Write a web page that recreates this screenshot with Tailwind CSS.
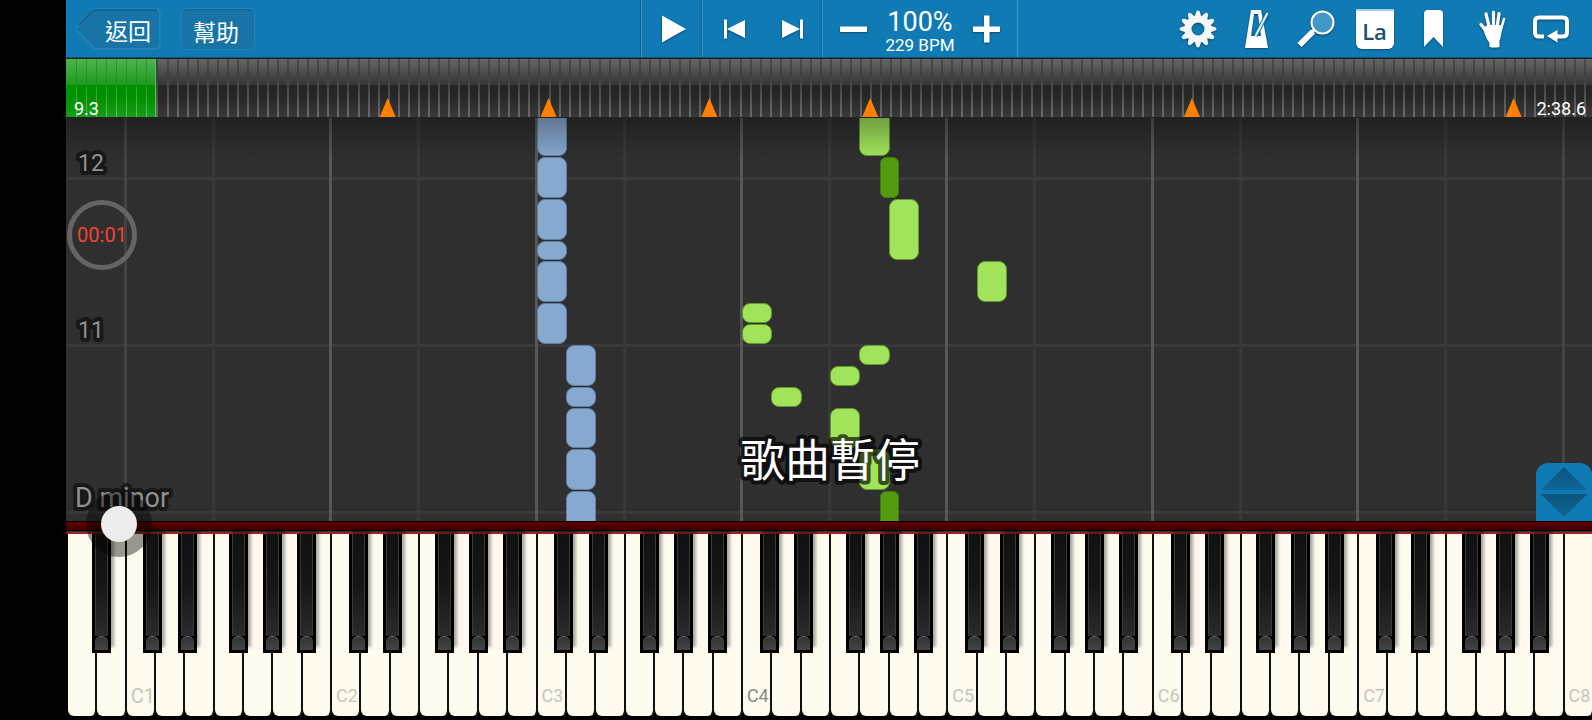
<!DOCTYPE html>
<html lang="zh-Hant">
<head>
<meta charset="UTF-8">
<meta name="viewport" content="width=device-width, initial-scale=1.0">
<title>Piano</title>
<script src="https://cdn.jsdelivr.net/npm/@tailwindcss/browser@4"></script>
</head>
<body class="bg-black">

	<div class="h-screen flex flex-col pl-[66px] overflow-hidden font-[Roboto,'Noto_Sans_CJK_TC',sans-serif] text-white">

		<!-- toolbar -->
		<header class="h-[58px] shrink-0 grid grid-cols-[1fr_auto_1fr] bg-[#107ab4] border-b border-[#0b4f75]">
			<div class="flex items-center pt-px pl-[9px] gap-5">
				<button type="button" class="relative w-[86px] h-[42px] pl-5 pt-2 text-[23px]">
					<svg class="absolute inset-0" width="86" height="42" viewBox="0 0 86 42" fill="none">
						<path d="M22 1H80Q85 1 85 6V36Q85 41 80 41H22Q19 41 17 38L2 23Q1 21 2 19L17 4Q19 1 22 1Z" fill="#1874a6" stroke="#2585ba" stroke-width="1.5"/>
						<path d="M4 17L17 4Q19 2 22 2H82" stroke="#135f89" stroke-width="1.5"/>
					</svg>
					<span class="relative">返回</span>
				</button>
				<button type="button" class="w-[74px] h-[42px] pt-2 pr-1 text-[23px] rounded-md bg-[#1874a6] border border-[#2585ba] shadow-[inset_0_1px_1px_#135f89]">幫助</button>
			</div>

			<div class="flex pl-px">
				<button type="button" aria-label="Play" class="w-[61px] grid place-items-center border-l border-[#3a97c8] shadow-[-1px_0_0_#0c6494]">
					<svg class="drop-shadow-[0_1px_1px_#0006] ml-1" width="26" height="28" viewBox="0 0 26 28" fill="#fff"><path d="M1 0.5L25 14L1 27.5Z"/></svg>
				</button>
				<div class="w-[120px] flex border-l border-[#3a97c8] shadow-[-1px_0_0_#0c6494]">
					<button type="button" aria-label="Previous" class="flex-1 grid place-items-center">
						<svg class="drop-shadow-[0_1px_1px_#0006] ml-1" width="22" height="20" viewBox="0 0 22 20" fill="#fff"><path d="M0 0.5H3V19.5H0ZM3 10L21 1V19Z"/></svg>
					</button>
					<button type="button" aria-label="Next" class="flex-1 grid place-items-center">
						<svg class="drop-shadow-[0_1px_1px_#0006]" width="22" height="20" viewBox="0 0 22 20" fill="#fff"><path d="M22 0.5H19V19.5H22ZM19 10L1 1V19Z"/></svg>
					</button>
				</div>
				<div class="w-[196px] flex items-stretch border-x border-[#3a97c8] shadow-[-1px_0_0_#0c6494]">
					<button type="button" aria-label="Slower" class="flex-1 grid place-items-center">
						<svg class="drop-shadow-[0_1px_1px_#0006]" width="28" height="28" viewBox="0 0 28 28" fill="#fff"><path d="M0 11.5H27V17H0Z"/></svg>
					</button>
					<div class="w-[72px] flex flex-col items-center pt-2">
						<span class="text-[27px] leading-[29px]">100%</span>
						<span class="text-[17px] leading-4 whitespace-nowrap">229 BPM</span>
					</div>
					<button type="button" aria-label="Faster" class="flex-1 grid place-items-center">
						<svg class="drop-shadow-[0_1px_1px_#0006]" width="28" height="28" viewBox="0 0 28 28" fill="#fff"><path d="M0 11.5H11V0.5H16.5V11.5H27V17H16.5V27.5H11V17H0Z"/></svg>
					</button>
				</div>
			</div>

			<div class="flex justify-end pr-3 pt-px">
				<button type="button" aria-label="Settings" class="w-[59px] grid place-items-center">
					<svg class="drop-shadow-[0_1px_1px_#0006]" width="38" height="38" viewBox="-19 -19 38 38">
						<g id="gear-teeth" fill="#f6f6f6"></g>
						<circle r="10" fill="none" stroke="#f6f6f6" stroke-width="7"/>
					</svg>
				</button>
				<button type="button" aria-label="Metronome" class="w-[59px] grid place-items-center">
					<svg class="drop-shadow-[0_1px_1px_#0006]" width="26" height="38" viewBox="0 0 26 38">
						<path fill="#fff" fill-rule="evenodd" d="M7 0H17L24 38H1ZM10 4L7 26H17L14 4Z"/>
						<path d="M11.500 26L23.500 3" stroke="#107ab4" stroke-width="4"/>
						<path d="M11.500 26L23.500 3" stroke="#e8eef2" stroke-width="2"/>
					</svg>
				</button>
				<button type="button" aria-label="Zoom" class="w-[59px] grid place-items-center">
					<svg class="drop-shadow-[0_1px_1px_#0006]" width="38" height="38" viewBox="0 0 38 38">
						<path d="M2.500 35L16 21.500" stroke="#fff" stroke-width="6"/>
						<path d="M15 22L19 18" stroke="#fff" stroke-width="3"/>
						<circle cx="25.500" cy="12.500" r="11" fill="#4198c6" stroke="#fff" stroke-width="2"/>
					</svg>
				</button>
				<button type="button" class="w-[59px] grid place-items-center">
					<span class="w-[38px] h-10 rounded-b-md bg-white border-t-2 border-[#9fd0ec] shadow-[0_1px_2px_#0006] pt-[6px] text-[22px] leading-7 font-['Open_Sans',sans-serif] font-semibold text-[#1b4f72]">La</span>
				</button>
				<button type="button" aria-label="Bookmark" class="w-[59px] grid place-items-center">
					<svg class="drop-shadow-[0_1px_1px_#0006]" width="19" height="38" viewBox="0 0 19 38" fill="#fff"><path d="M4 0H15Q19 0 19 4V37L9.500 27L0 37V4Q0 0 4 0Z"/></svg>
				</button>
				<button type="button" aria-label="Hands" class="w-[59px] grid place-items-center">
					<svg class="drop-shadow-[0_1px_1px_#0006]" width="27" height="38" viewBox="0 0 27 38" fill="none" stroke="#fff" stroke-linecap="round">
						<path d="M7 4L10.500 18M14.500 2V18M20 3.500L18 18" stroke-width="3.200"/>
						<path d="M25 9L21.500 21" stroke-width="2.600"/>
						<path d="M2 14.500L8 22" stroke-width="3.200"/>
						<path d="M8.500 15H21.500L23 19Q22 27 20.500 31V37Q15 38 10.500 37V33Q6 27 4 18Z" fill="#fff" stroke="none"/>
					</svg>
				</button>
				<button type="button" aria-label="Loop" class="w-[58px] grid place-items-center">
					<svg class="drop-shadow-[0_1px_1px_#0006]" width="36" height="28" viewBox="0 0 36 28">
						<path d="M11 21.500H6Q2 21.500 2 17.500V6.500Q2 2.500 6 2.500H30Q34 2.500 34 6.500V17.500Q34 21.500 30 21.500H24" fill="none" stroke="#fff" stroke-width="4"/>
						<path d="M14 21L24.500 15V27.500Z" fill="#fff"/>
					</svg>
				</button>
			</div>
		</header>

		<!-- song timeline -->
		<div id="timeline" class="relative h-[60px] shrink-0 border-y border-[#222] bg-[linear-gradient(#666,#343434_45%,#262626_45%,#272727_65%,#383838)]">
			<div id="progress" class="absolute inset-y-0 left-0 bg-[linear-gradient(#4fb44f,#1d9a1d_45%,#009000_45%,#009000_65%,#189c18)] border-r border-[#5bbd5b]"></div>
			<div id="bars" class="absolute inset-0"></div>
			<span class="absolute left-2 bottom-0 text-lg leading-4">9.3</span>
			<span class="absolute right-[6px] bottom-0 text-lg leading-4">2:38.6</span>
		</div>

		<!-- falling notes -->
		<main id="roll" class="relative flex-1 min-h-0 bg-[#2f2f2f] overflow-hidden">
			<div id="grid" class="absolute inset-y-0 left-px right-[-1px]"></div>
			<div id="notes" class="absolute inset-y-0 left-px right-[-1px]"></div>
			<div class="absolute inset-x-0 top-0 h-10 bg-linear-to-b from-black/30 to-transparent"></div>
			<svg class="absolute inset-0 w-full h-full overflow-visible" fill="#909090" stroke="#171717" stroke-width="8" stroke-linejoin="round" paint-order="stroke">
				<svg y="100%" class="overflow-visible">
					<text x="12" y="-350" font-size="23">12</text>
					<text x="12" y="-183" font-size="23">11</text>
					<text x="9" y="-14" font-size="27">D minor</text>
				</svg>
				<svg x="50%" y="100%" class="overflow-visible">
					<text x="1" y="-44" font-size="45" text-anchor="middle" fill="#fff" stroke="#000" stroke-opacity="0.66">歌曲暫停</text>
				</svg>
			</svg>
			<div class="absolute left-px bottom-[251px] size-[70px] rounded-full border-5 border-[#646464] grid place-items-center text-xl text-[#f44336]">00:01</div>
			<button type="button" aria-label="Keyboard size" class="absolute right-0 bottom-0 w-14 h-[58px] rounded-t-xl bg-[#107ab4] grid place-items-center">
				<svg width="48" height="52" viewBox="0 0 48 52">
					<defs>
						<linearGradient id="up" x2="0" y2="1"><stop stop-color="#0b547d"/><stop offset="1" stop-color="#0e6797"/></linearGradient>
					</defs>
					<path d="M24 1L47.500 24H0.500Z" fill="url(#up)"/>
					<path d="M0.500 28H47.500L24 51Z" fill="url(#up)"/>
				</svg>
			</button>
		</main>

		<!-- keyboard -->
		<div class="relative shrink-0 h-[199px]">
			<div class="h-[10px] border-y border-black bg-linear-to-b from-[#600000] to-[#400000]"></div>
			<div class="h-[3px] border-t border-[#333] bg-[#a32020]"></div>
			<div class="relative h-[182px] ml-[2px] mr-[-2px]">
				<div id="white-keys" class="flex h-full"></div>
				<div id="black-keys" class="absolute inset-x-0 top-0 h-[119px]"></div>
			</div>
			<!-- touch pointer -->
			<div class="absolute left-5 top-[-30px] size-[66px] rounded-full bg-black/40 grid place-items-center">
				<div class="size-9 rounded-full bg-[#ececec]"></div>
			</div>
		</div>
	</div>

	<script>
	const WHITE = 52;
	const BARS = 151.8;
	const keyWidth = 100 / WHITE;

	function add(parent, className, style) {
		const el = document.createElement("div");
		el.className = className;
		Object.assign(el.style, style);
		document.getElementById(parent).appendChild(el);
		return el;
	}

	// gear teeth
	let teeth = "";
	for (let i = 0; i < 12; i++) {
		teeth += '<path d="M-3.500 -12L-1.600 -17.500Q0 -19.500 1.600 -17.500L3.500 -12Z" transform="rotate(' + (i * 30) + ')"/>';
	}
	document.getElementById("gear-teeth").innerHTML = teeth;

	// timeline
	document.getElementById("progress").style.width = (9 / BARS * 100) + "%";
	for (let i = 1; i < BARS; i++) {
		const tick = i < 9
			? "absolute inset-y-0 w-px bg-[linear-gradient(#359535,#1f8c1f_45%,#2f9f2f_50%,#60c060)]"
			: "absolute inset-y-0 w-[2px] bg-[linear-gradient(#484848,#3f3f3f_30%,#484848_50%,#6a6a6a)]";
		add("bars", tick, { left: (i / BARS * 100) + "%" });
	}
	[32, 48, 64, 80, 112, 144].forEach(function (bar) {
		add("bars", "absolute bottom-0 -ml-2 w-4 h-[19px] bg-[#ff8000] [clip-path:polygon(50%_0,100%_100%,0_100%)]", { left: (bar / BARS * 100) + "%" });
	});

	// bar lines and octave lines
	[9, 176, 343].forEach(function (y) {
		add("grid", "absolute inset-x-0 h-[3px] bg-[#393939]", { bottom: (y - 2) + "px" });
	});
	for (let o = 0; o < 8; o++) {
		const c = 2 + o * 7;
		add("grid", "absolute inset-y-0 -ml-[2px] w-[3px] " + (o == 0 || o == 7 ? "bg-[#434343]" : "bg-[#575757]"), { left: (c * keyWidth) + "%" });
		if (o < 7) {
			add("grid", "absolute inset-y-0 -ml-[2px] w-[3px] bg-[#393939]", { left: ((c + 3) * keyWidth) + "%" });
		}
	}

	// [key, start, end] in eighths from bar 11
	const notes = [
		[16, 9, 12, "b"], [16, 7, 9, "b"], [16, 5, 7, "b"], [16, 4, 5, "b"], [16, 2, 4, "b"], [16, 0, 2, "b"],
		[17, -2, 0, "b"], [17, -3, -2, "b"], [17, -5, -3, "b"], [17, -7, -5, "b"], [17, -9, -7, "b"],
		[27, 9, 12, "g"], [28, 7, 9, "s"], [28, 4, 7, "g"], [31, 2, 4, "g"], [23, 1, 2, "g"], [23, 0, 1, "g"],
		[27, -1, 0, "g"], [26, -2, -1, "g"], [24, -3, -2, "g"], [26, -5, -3, "g"], [27, -7, -5, "g"], [28, -9, -7, "s"]
	];
	const noteClass = {
		b: "absolute rounded-lg border border-[#5f7fa6] bg-[#88a9cf]",
		g: "absolute rounded-lg border border-[#5f9a2a] bg-[#a1e45b]",
		s: "absolute rounded-md border border-[#3f7a0c] bg-[#549b10] w-[19px] -ml-[9px]"
	};
	notes.forEach(function (n) {
		const from = Math.round(176 + n[1] * 167 / 8);
		const to = Math.round(176 + n[2] * 167 / 8);
		const style = { left: (n[0] * keyWidth) + "%", bottom: (from + 1) + "px", height: (to - from - 1) + "px" };
		if (n[3] != "s") style.width = "calc(" + keyWidth + "% + 1px)";
		add("notes", noteClass[n[3]], style);
	});

	// white keys
	for (let i = 0; i < WHITE; i++) {
		const key = add("white-keys", "flex-1 min-w-0 border-r-2 border-[#111] bg-[#fefaed] rounded-b-md flex items-end pl-1 pb-2 leading-6", {});
		if (i % 7 == 2) {
			const octave = (i - 2) / 7 + 1;
			key.textContent = "C" + octave;
			key.classList.add(octave == 1 ? "text-xl" : "text-lg", octave == 4 ? "text-[#8c897f]" : "text-[#c9c6ba]");
		}
	}

	// black keys, centre measured in white keys from C
	for (let o = -1; o < 7; o++) {
		[0.91, 2.09, 3.84, 5, 6.16].forEach(function (pos) {
			const x = 2 + o * 7 + pos;
			if (x < 1) return;
			const key = add("black-keys", "absolute inset-y-0 -ml-[10px] w-[19px] bg-black px-[3px] pb-[3px] flex flex-col shadow-[3px_-6px_3px_#0005]", { left: (x * keyWidth) + "%" });
			key.innerHTML = '<div class="flex-1 border-x border-[#3a3a3a] bg-linear-to-b from-[#111] via-[#161616] to-[#2b2b2b]"></div>'
				+ '<div class="h-[14px] border-t border-[#666] rounded-t-md bg-linear-to-b from-[#333] to-[#444]"></div>';
		});
	}
	</script>

</body>
</html>
